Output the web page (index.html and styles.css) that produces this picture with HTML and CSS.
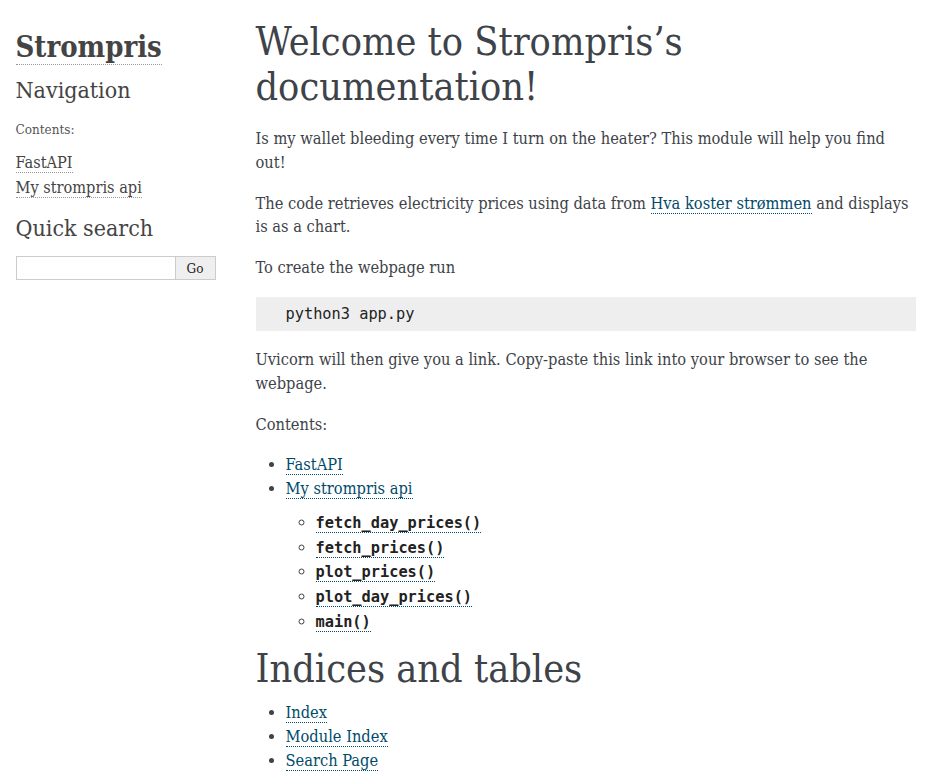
FILE: index.html
```html
<!DOCTYPE html>
<html lang="en">
<head>
<meta charset="utf-8">
<title>Welcome to Strompris’s documentation!</title>
<link rel="stylesheet" href="styles.css">
</head>
<body>
<div class="document">
  <div class="sidebar">
    <h1 class="logo"><a href="#">Strompris</a></h1>
    <h3 class="side-heading">Navigation</h3>
    <p class="side-caption">Contents:</p>
    <ul class="side-toc">
      <li><a href="#">FastAPI</a></li>
      <li><a href="#">My strompris api</a></li>
    </ul>
    <div class="searchbox">
      <h3 class="side-heading">Quick search</h3>
      <form class="search">
        <input class="search-text" type="text" name="q" aria-label="Search">
        <input class="search-go" type="submit" value="Go">
      </form>
    </div>
  </div>
  <div class="main">
    <h1 class="title page-title">Welcome to Strompris’s documentation!</h1>
    <p class="para">Is my wallet bleeding every time I turn on the heater? This module will help you find out!</p>
    <p class="para">The code retrieves electricity prices using data from <a class="ref" href="#">Hva koster strømmen</a> and displays is as a chart.</p>
    <p class="para">To create the webpage run</p>
    <pre class="code-block">python3 app.py</pre>
    <p class="para">Uvicorn will then give you a link. Copy-paste this link into your browser to see the webpage.</p>
    <p class="para">Contents:</p>
    <ul class="toc">
      <li><a class="ref" href="#">FastAPI</a></li>
      <li><a class="ref" href="#">My strompris api</a>
        <ul class="toc sub">
          <li><a class="ref" href="#"><code class="xref">fetch_day_prices()</code></a></li>
          <li><a class="ref" href="#"><code class="xref">fetch_prices()</code></a></li>
          <li><a class="ref" href="#"><code class="xref">plot_prices()</code></a></li>
          <li><a class="ref" href="#"><code class="xref">plot_day_prices()</code></a></li>
          <li><a class="ref" href="#"><code class="xref">main()</code></a></li>
        </ul>
      </li>
    </ul>
    <h1 class="title section-title">Indices and tables</h1>
    <ul class="toc">
      <li><a class="ref" href="#">Index</a></li>
      <li><a class="ref" href="#">Module Index</a></li>
      <li><a class="ref" href="#">Search Page</a></li>
    </ul>
  </div>
</div>
</body>
</html>
```
FILE: styles.css
```css
body {
  margin: 0;
  font-family: "DejaVu Serif Condensed", "DejaVu Serif", serif;
  font-size: 16.3px;
  background: #fff;
  color: #000;
}

.document {
  width: 940px;
  margin: 17px auto 0;
  display: flex;
  align-items: flex-start;
}

/* ---------- sidebar ---------- */
.sidebar {
  width: 220px;
  flex: none;
  box-sizing: border-box;
  padding: 18px 10px;
  font-size: 13.4px;
  line-height: 21px;
}

.sidebar a {
  color: #444;
  text-decoration: none;
  border-bottom: 1px dotted #999;
}

.logo {
  margin: -5px 0 11px;
  font-size: 29px;
  line-height: 34px;
  font-weight: bold;
  color: #444;
}

.side-heading {
  font-size: 23px;
  line-height: 30px;
  font-weight: normal;
  color: #444;
  margin: 0 0 5px;
}

.side-caption {
  color: #555;
  margin: 14px 0 10px;
}

.side-toc {
  list-style: none;
  margin: 10px 0;
  padding: 0;
}

.side-toc li {
  font-size: 16.2px;
  line-height: 25px;
}

.searchbox {
  margin-top: 13px;
}

.search {
  display: flex;
  margin: 13px 0 0;
}

.search-text,
.search-go {
  box-sizing: border-box;
  border: 1px solid #ccc;
  font-family: "DejaVu Serif Condensed", "DejaVu Serif", serif;
  font-size: 13.4px;
  padding: 0 4px;
  height: 24px;
  margin: 0;
  border-radius: 0;
}

.search-text {
  width: 160px;
  background: #fff;
}

.search-go {
  width: 40px;
  border-left: none;
  background: #efefef;
  color: #222;
}

/* ---------- main body ---------- */
.main {
  flex: 1;
  padding: 2px 30px 0;
  color: #3e4349;
  line-height: 23.8px;
}

.title {
  font-size: 39.3px;
  line-height: 45px;
  font-weight: normal;
  margin: 0 0 10px;
}

.page-title {
  margin-bottom: 18px;
}

.section-title {
  margin-top: 12px;
}

.para {
  margin: 17px 0;
}

.ref {
  color: #004b6b;
  text-decoration: none;
  border-bottom: 1px dotted #004b6b;
}

.code-block {
  background: #eee;
  padding: 7px 30px;
  margin: 15px 0;
  line-height: 20px;
  font-family: "DejaVu Sans Mono", monospace;
  font-size: 15.3px;
  color: #222;
}

.toc {
  margin: 10px 0 10px 30px;
  padding: 0;
}

.toc.sub {
  list-style: circle;
}

.toc.sub > li {
  line-height: 24.7px;
}

.xref {
  font-family: "DejaVu Sans Mono", monospace;
  font-size: 15.3px;
  font-weight: bold;
  color: #222;
}
```
